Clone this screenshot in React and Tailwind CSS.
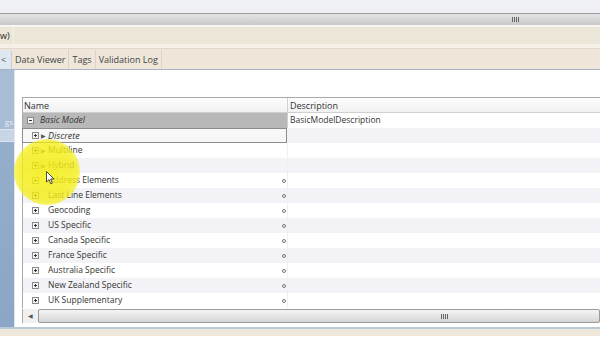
import React from "react";

const rows = [
  { name: "Discrete", arrow: true, italic: true, focus: true },
  { name: "Multiline", arrow: true },
  { name: "Hybrid", arrow: true },
  { name: "Address Elements", dot: true },
  { name: "Last Line Elements", dot: true },
  { name: "Geocoding", dot: true },
  { name: "US Specific", dot: true },
  { name: "Canada Specific", dot: true },
  { name: "France Specific", dot: true },
  { name: "Australia Specific", dot: true },
  { name: "New Zealand Specific", dot: true },
  { name: "UK Supplementary", dot: true },
];

function PlusBox({ minus }) {
  return (
    <svg width="7" height="7" viewBox="0 0 7 7" className="shrink-0">
      <rect x="0.5" y="0.5" width="6" height="6" fill="#f4f4f4" stroke="#8a8a8a" />
      <line x1="2" y1="3.5" x2="5" y2="3.5" stroke="#333" />
      {!minus && <line x1="3.5" y1="2" x2="3.5" y2="5" stroke="#333" />}
    </svg>
  );
}

function Grip() {
  return (
    <div className="flex gap-[1px]">
      <div className="w-[1px] h-[5px] bg-[#666]" />
      <div className="w-[1px] h-[5px] bg-[#666]" />
      <div className="w-[1px] h-[5px] bg-[#666]" />
      <div className="w-[1px] h-[5px] bg-[#666]" />
    </div>
  );
}

export default function App() {
  return (
    <div
      className="relative w-[600px] h-[337px] overflow-hidden bg-white text-[#333] text-[8.5px] leading-none"
      style={{ fontFamily: '"Open Sans", "Noto Sans", sans-serif' }}
    >
      {/* top area */}
      <div className="h-[13px] bg-[#eef0f6]" />
      {/* splitter */}
      <div className="h-[12px] border-t border-[#9c9c9c] bg-gradient-to-b from-[#e4e4e4] to-[#c9c9c9] flex items-center">
        <div className="ml-[512px]">
          <Grip />
        </div>
      </div>
      <div className="h-[2px] bg-[#f7f5f0]" />
      {/* toolbar */}
      <div className="h-[17px] bg-[#ebe6d8] flex items-center">
        <span className="text-[9px] text-[#222]">w)</span>
        <div className="ml-[3px] h-full w-[1px] bg-[#f4f0e6]" />
      </div>
      <div className="h-[5px] bg-[#f4f0e8] border-b border-[#e0d8c8]" />
      {/* tabs */}
      <div className="h-[21px] bg-[#eee6d9] border-b border-[#a8b4c6] flex items-end">
        <div className="h-[19px] w-[12px] bg-[#dfe7f0] border-r border-[#c8cdd3] rounded-tr-[3px] flex items-center text-[#555] text-[9px]">
          <span className="ml-[1px]">&lt;</span>
        </div>
        <div className="h-[19px] px-[3px] border-r border-[#ddd3c2] flex items-center text-[9px] text-[#444]">Data Viewer</div>
        <div className="h-[19px] px-[3px] border-r border-[#ddd3c2] flex items-center text-[9px] text-[#444]">Tags</div>
        <div className="h-[19px] px-[3px] border-r border-[#ddd3c2] flex items-center text-[9px] text-[#444]">Validation Log</div>
      </div>
      {/* body */}
      <div className="flex h-[257px]">
        {/* left strip */}
        <div className="w-[15px] shrink-0 flex flex-col border-r border-[#dde5ee]">
          <div className="h-[59px] bg-[#a9bcd5] flex items-end justify-end pr-[1px] pb-[3px]">
            <span className="text-[8px] text-[#e8eef6]">gs</span>
          </div>
          <div className="h-[1px] bg-[#dbe4ef]" />
          <div className="h-[11px] bg-[#c8d5e5]" />
          <div className="h-[1px] bg-[#dbe4ef]" />
          <div className="flex-1 bg-gradient-to-b from-[#94aecb] to-[#8ba6c6]" />
        </div>
        {/* main */}
        <div className="flex-1 bg-white pt-[27px] pl-[7px] flex flex-col">
          {/* grid */}
          <div className="border-l border-t border-[#a9a9a9] flex flex-col">
            {/* header */}
            <div className="h-[15px] flex bg-gradient-to-b from-[#fdfdfd] to-[#f1f1f1] border-b border-[#d0d0d0]">
              <div className="w-[265px] shrink-0 border-r border-[#cfcfcf] flex items-center pl-[1px] text-[9px] text-[#333]">Name</div>
              <div className="flex-1 flex items-center pl-[2px] text-[9px] text-[#333]">Description</div>
            </div>
            {/* basic model */}
            <div className="h-[15px] flex">
              <div className="w-[265px] shrink-0 bg-[#b8b8b8] flex items-center pl-[4px] border-r border-[#cfcfcf]">
                <PlusBox minus />
                <span className="ml-[6px] italic text-[#333]">Basic Model</span>
              </div>
              <div className="flex-1 flex items-center pl-[2px] bg-white">BasicModelDescription</div>
            </div>
            {rows.map((r, i) => (
              <div key={r.name} className={"h-[15px] flex " + (i % 2 === 0 ? "bg-[#f3f3f7]" : "bg-white")}>
                <div
                  className={
                    "w-[265px] shrink-0 flex items-center pl-[9px] pr-[2px] " +
                    (r.focus ? "border border-[#8c8c8c] bg-[#f7f7f7] -ml-[1px] w-[265px]" : "border-r border-[#f0f0f0]")
                  }
                >
                  <PlusBox />
                  {r.arrow ? (
                    <>
                      <span className="ml-[2px] text-[6px] text-[#555]">▶</span>
                      <span className={"ml-[2px] " + (r.italic ? "italic text-[9px]" : "")}>{r.name}</span>
                    </>
                  ) : (
                    <span className="ml-[9px]">{r.name}</span>
                  )}
                  <div className="flex-1" />
                  {r.dot && <div className="w-[4px] h-[4px] rounded-full border border-[#777] -mr-[1px]" />}
                </div>
                <div className="flex-1" />
              </div>
            ))}
          </div>
          {/* horizontal scrollbar */}
          <div className="h-[14px] mt-[1px] flex border-l border-[#a9a9a9] bg-[#f0f0f0]">
            <div className="w-[14px] flex items-center justify-center text-[6px] text-[#555]">◀</div>
            <div className="flex-1 ml-[1px] border border-[#9a9a9a] rounded-[2px] bg-gradient-to-b from-[#f4f4f4] via-[#e6e6e6] to-[#d4d4d4] flex items-center">
              <div className="ml-[402px]">
                <Grip />
              </div>
            </div>
          </div>
          <div className="flex-1 bg-white" />
        </div>
      </div>
      <div className="h-[2px] bg-[#b9c9d6]" />
      <div className="h-[7px] bg-[#efe8da]" />

      {/* cursor highlight */}
      <div className="absolute left-[14px] top-[139px] w-[66px] h-[66px] rounded-full bg-[radial-gradient(circle,rgba(244,238,20,0.88)_0%,rgba(244,238,20,0.8)_60%,rgba(244,238,20,0.4)_85%,rgba(244,238,20,0)_100%)]" />
      {/* mouse cursor */}
      <svg className="absolute left-[46px] top-[171px]" width="9" height="14" viewBox="0 0 9 14">
        <path d="M0.5 0.5 L0.5 11 L3 8.6 L4.8 12.8 L6.3 12.1 L4.6 8 L8 8 Z" fill="#fff" stroke="#222" strokeWidth="0.8" strokeLinejoin="round" />
      </svg>
    </div>
  );
}
